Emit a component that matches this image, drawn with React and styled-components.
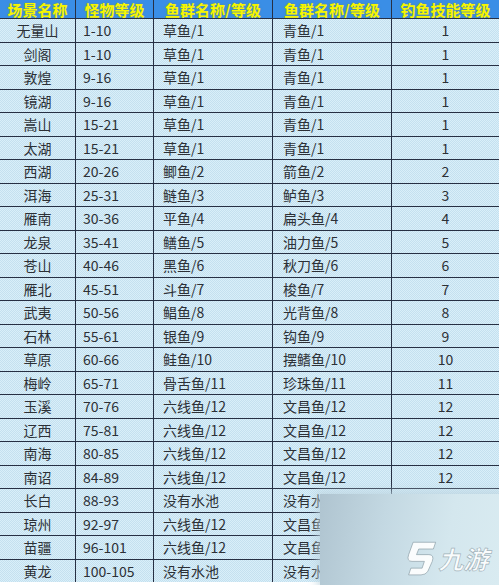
import React from "react";
import styled, { createGlobalStyle } from "styled-components";

const GlobalStyle = createGlobalStyle`
  html, body {
    margin: 0;
    padding: 0;
    background: #ffffff;
  }
  body {
    font-family: "Noto Sans CJK SC", "Liberation Sans", sans-serif;
  }
`;

const rows = [
  ["无量山", "1-10", "草鱼/1", "青鱼/1", "1"],
  ["剑阁", "1-10", "草鱼/1", "青鱼/1", "1"],
  ["敦煌", "9-16", "草鱼/1", "青鱼/1", "1"],
  ["镜湖", "9-16", "草鱼/1", "青鱼/1", "1"],
  ["嵩山", "15-21", "草鱼/1", "青鱼/1", "1"],
  ["太湖", "15-21", "草鱼/1", "青鱼/1", "1"],
  ["西湖", "20-26", "鲫鱼/2", "箭鱼/2", "2"],
  ["洱海", "25-31", "鲢鱼/3", "鲈鱼/3", "3"],
  ["雁南", "30-36", "平鱼/4", "扁头鱼/4", "4"],
  ["龙泉", "35-41", "鳝鱼/5", "油力鱼/5", "5"],
  ["苍山", "40-46", "黑鱼/6", "秋刀鱼/6", "6"],
  ["雁北", "45-51", "斗鱼/7", "梭鱼/7", "7"],
  ["武夷", "50-56", "鲳鱼/8", "光背鱼/8", "8"],
  ["石林", "55-61", "银鱼/9", "钩鱼/9", "9"],
  ["草原", "60-66", "鲑鱼/10", "摆鳍鱼/10", "10"],
  ["梅岭", "65-71", "骨舌鱼/11", "珍珠鱼/11", "11"],
  ["玉溪", "70-76", "六线鱼/12", "文昌鱼/12", "12"],
  ["辽西", "75-81", "六线鱼/12", "文昌鱼/12", "12"],
  ["南海", "80-85", "六线鱼/12", "文昌鱼/12", "12"],
  ["南诏", "84-89", "六线鱼/12", "文昌鱼/12", "12"],
  ["长白", "88-93", "没有水池", "没有水池", ""],
  ["琼州", "92-97", "六线鱼/12", "文昌鱼/12", ""],
  ["苗疆", "96-101", "六线鱼/12", "文昌鱼/12", ""],
  ["黄龙", "100-105", "没有水池", "没有水池", ""]
];

const headers = ["场景名称", "怪物等级", "鱼群名称/等级", "鱼群名称/等级", "钓鱼技能等级"];

// center / left alignment per column
const aligns = ["center", "left", "left", "left", "center"];
const pads = [0, 7, 9, 10, 0];

const Page = styled.div`
  position: relative;
  width: 499px;
  height: 585px;
  overflow: hidden;
  background: #ffffff;
`;

const Table = styled.div`
  display: grid;
  grid-template-columns: 75px 77px 118px 118px 1fr;
  grid-template-rows: 18px;
  grid-auto-rows: 22.5px;
  gap: 1px;
  background: #273044;
  width: 499px;
`;

const HeadCell = styled.div`
  display: flex;
  align-items: center;
  justify-content: center;
  background: #3a8ee6;
  color: #f6f600;
  font-size: 15px;
  font-weight: bold;
  text-shadow: 0 0 2px rgba(140, 140, 20, 0.6);
  white-space: nowrap;
  overflow: hidden;
`;

const Cell = styled.div`
  display: flex;
  align-items: center;
  justify-content: ${p => (p.align === "center" ? "center" : "flex-start")};
  padding-left: ${p => p.pad}px;
  background-color: #cfe8f5;
  background-image: repeating-conic-gradient(#d9eff9 0 25%, #c4e0ef 0 50%);
  background-size: 2px 2px;
  color: #2c3036;
  font-size: 14px;
  white-space: nowrap;
  overflow: hidden;
`;

const Watermark = styled.div`
  position: absolute;
  left: 320px;
  top: 494px;
  width: 179px;
  height: 91px;
  background: linear-gradient(100deg, #afc4d0 0%, #c3d8e2 35%, #d4e7ee 70%, #d9ebf1 100%);
  box-shadow: 0 0 8px 3px rgba(190, 212, 222, 0.8);
`;

const Logo = styled.div`
  position: absolute;
  right: 8px;
  bottom: 9px;
  display: flex;
  align-items: center;
  gap: 3px;
`;

const LogoText = styled.span`
  display: inline-block;
  font-family: "Noto Sans CJK SC", sans-serif;
  font-size: 25px;
  font-weight: bold;
  color: rgba(255, 255, 255, 0.9);
  -webkit-text-stroke: 0.7px rgba(130, 150, 160, 0.7);
  transform: skewX(-14deg);
`;

const LogoMark = () => (
  <svg width="34" height="36" viewBox="0 0 30 32">
    <path
      d="M8 2 L28 2 L26 8 L13 8 L11 13 L22 13 Q27 13 25 19 L21 28 Q19 31 15 31 L4 31 L6 25 L16 25 L18 19 L7 19 Q2 19 4 13 Z"
      fill="rgba(255,255,255,0.9)"
      stroke="rgba(130,150,160,0.7)"
      strokeWidth="0.8"
    />
  </svg>
);

const App = () => (
  <Page>
    <GlobalStyle />
    <Table>
      {headers.map((h, i) => (
        <HeadCell key={"h" + i}>{h}</HeadCell>
      ))}
      {rows.map((r, ri) =>
        r.map((c, ci) => (
          <Cell key={ri + "-" + ci} align={aligns[ci]} pad={pads[ci]}>
            {c}
          </Cell>
        ))
      )}
    </Table>
    <Watermark>
      <Logo>
        <LogoMark />
        <LogoText>九游</LogoText>
      </Logo>
    </Watermark>
  </Page>
);

export default App;
